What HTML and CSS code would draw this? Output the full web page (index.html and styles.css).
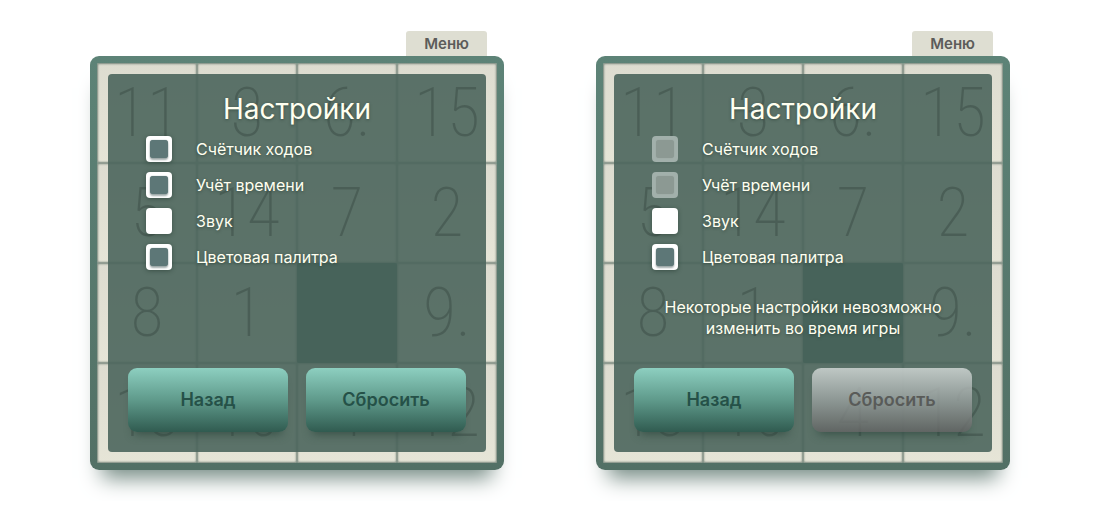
FILE: index.html
```html
<!DOCTYPE html>
<html lang="ru">
<head>
<meta charset="utf-8">
<title>Пятнашки</title>
<link rel="stylesheet" href="styles.css">
</head>
<body>
<main class="screens">
  <section class="game">
    <button class="menu-tab" type="button">Меню</button>
    <div class="board">
      <div class="tiles">
        <span class="tile">11</span><span class="tile">3</span><span class="tile">6.</span><span class="tile">15</span>
        <span class="tile">5</span><span class="tile">14</span><span class="tile">7</span><span class="tile">2</span>
        <span class="tile">8</span><span class="tile">1</span><span class="tile empty"></span><span class="tile">9.</span>
        <span class="tile">13</span><span class="tile">10</span><span class="tile">4</span><span class="tile">12</span>
      </div>
      <form class="settings">
        <h1 class="title">Настройки</h1>
        <label class="option"><input class="box" type="checkbox">Счётчик ходов</label>
        <label class="option"><input class="box" type="checkbox">Учёт времени</label>
        <label class="option"><input class="box" type="checkbox" checked>Звук</label>
        <label class="option"><input class="box" type="checkbox">Цветовая палитра</label>
        <div class="actions">
          <button class="action" type="button">Назад</button>
          <button class="action" type="button">Сбросить</button>
        </div>
      </form>
    </div>
  </section>
  <section class="game">
    <button class="menu-tab" type="button">Меню</button>
    <div class="board">
      <div class="tiles">
        <span class="tile">11</span><span class="tile">3</span><span class="tile">6.</span><span class="tile">15</span>
        <span class="tile">5</span><span class="tile">14</span><span class="tile">7</span><span class="tile">2</span>
        <span class="tile">8</span><span class="tile">1</span><span class="tile empty"></span><span class="tile">9.</span>
        <span class="tile">13</span><span class="tile">10</span><span class="tile">4</span><span class="tile">12</span>
      </div>
      <form class="settings">
        <h1 class="title">Настройки</h1>
        <label class="option"><input class="box" type="checkbox" disabled>Счётчик ходов</label>
        <label class="option"><input class="box" type="checkbox" disabled>Учёт времени</label>
        <label class="option"><input class="box" type="checkbox" checked>Звук</label>
        <label class="option"><input class="box" type="checkbox">Цветовая палитра</label>
        <p class="notice">Некоторые настройки невозможно изменить во время игры</p>
        <div class="actions">
          <button class="action" type="button">Назад</button>
          <button class="action" type="button" disabled>Сбросить</button>
        </div>
      </form>
    </div>
  </section>
</main>
</body>
</html>
```
FILE: styles.css
```css
* {
  box-sizing: border-box;
}

body {
  margin: 0;
  background: #fff;
  font-family: Inter, "Open Sans", sans-serif;
}

.screens {
  display: flex;
  flex-wrap: wrap;
  justify-content: center;
  gap: 92px;
  padding: 31px 24px;
}

.game {
  display: flex;
  flex-direction: column;
  align-items: flex-end;
}

.menu-tab {
  margin-right: 17px;
  padding: 4px 18px 3px;
  border: 0;
  border-radius: 3px 3px 0 0;
  background: #deded2;
  color: #5c5c5a;
  font: 600 15px/18px Inter, "Open Sans", sans-serif;
}

.board {
  display: grid;
  padding: 7px;
  border-radius: 9px;
  background: linear-gradient(#5d8377, #527065);
  box-shadow: 0 20px 20px -12px #748a83;
}

.tiles,
.settings {
  grid-area: 1 / 1;
}

.tiles {
  display: grid;
  grid-template-columns: repeat(4, 100px);
  grid-auto-rows: 100px;
}

.tile {
  display: grid;
  place-items: center;
  border-radius: 2px;
  background: linear-gradient(#dddcd0, #e6e5d7);
  box-shadow: inset 0 0 2px 1px #76857b;
  color: #35150f;
  font: 200 68px/100px "Roboto Condensed", "Open Sans Condensed", Roboto, sans-serif;
}

.empty {
  background: #0c4038;
  box-shadow: none;
}

.settings {
  position: relative;
  display: flex;
  flex-direction: column;
  margin: 11px;
  padding: 16px 20px 20px;
  border-radius: 4px;
  background: rgba(77, 102, 93, 0.91);
  color: #fffff0;
  text-shadow: 0 1px 3px rgba(30, 50, 40, 0.5);
}

.title {
  margin: 0 0 8px;
  font-size: 28px;
  font-weight: 400;
  line-height: 38px;
  text-align: center;
}

.option {
  display: flex;
  align-items: center;
  gap: 24px;
  margin: 0 0 10px 18px;
  font-size: 16px;
  line-height: 26px;
}

.box {
  display: grid;
  appearance: none;
  width: 26px;
  height: 26px;
  margin: 0;
  padding: 4px;
  border-radius: 4px;
  background: #fff;
  box-shadow: 0 1px 4px rgba(30, 50, 40, 0.5);
}

.box::before {
  content: "";
  border-radius: 3px;
  background: #5d7777;
  box-shadow: 0 0 1px #5d7777, 0 2px 2px rgba(70, 90, 90, 0.5);
}

.box:checked::before {
  display: none;
}

.box:disabled {
  background: #a2b0ab;
  box-shadow: none;
}

.box:disabled::before {
  background: #8c9993;
  box-shadow: 0 0 1px #8c9993;
}

.notice {
  max-width: 300px;
  margin: 17px 0 0;
  align-self: center;
  font-size: 16px;
  line-height: 21px;
  text-align: center;
}

.actions {
  display: grid;
  grid-template-columns: 1fr 1fr;
  gap: 18px;
  margin-top: auto;
}

.action {
  height: 64px;
  padding: 0;
  border: 0;
  border-radius: 9px;
  background: linear-gradient(#8dcfc0, #5f9a8b 50%, #305b50);
  box-shadow: 0 8px 10px -6px rgba(40, 65, 56, 0.7);
  color: #255148;
  font: 600 18px/24px Inter, "Open Sans", sans-serif;
}

.action:disabled {
  background: linear-gradient(rgba(204, 211, 209, 0.88), rgba(150, 158, 156, 0.85) 50%, rgba(97, 99, 98, 0.85));
  color: #595b59;
}
```
